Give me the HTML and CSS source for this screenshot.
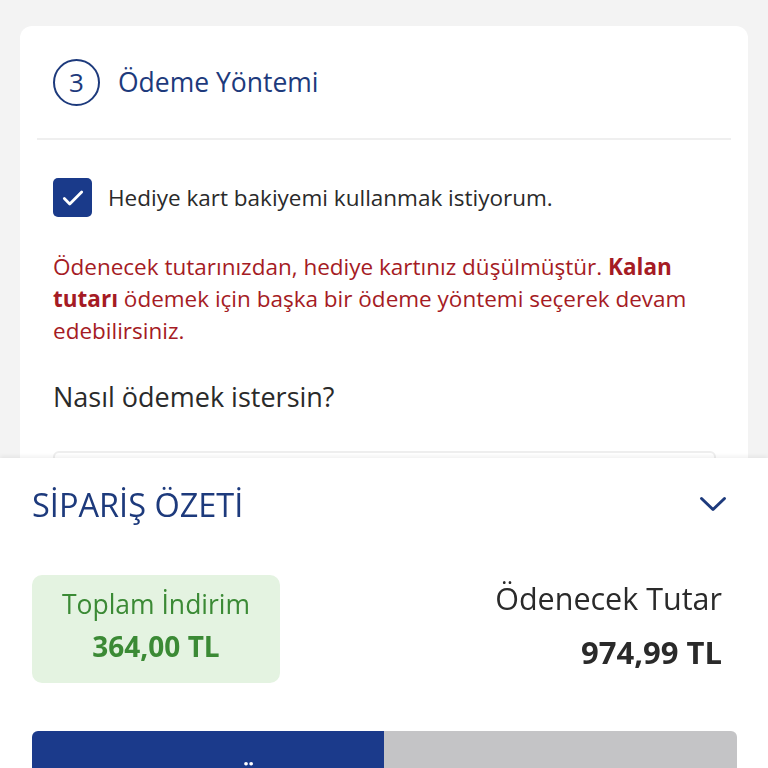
FILE: index.html
```html
<!DOCTYPE html>
<html lang="tr">
<head>
    <meta charset="UTF-8">
    <meta name="viewport" content="width=device-width, initial-scale=1.0">
    <title>Ödeme Yöntemi</title>
    <link rel="stylesheet" href="styles.css">
</head>
<body>
    <div class="page">
        <div class="card">
            <div class="step-header">
                <span class="step-number">3</span>
                <span class="step-title">Ödeme Yöntemi</span>
            </div>
            <div class="card-body">
                <label class="gift-check">
                    <span class="checkbox">
                        <svg width="26" height="26" viewBox="0 0 24 24" fill="none" stroke="#fff" stroke-width="2.6" stroke-linecap="round" stroke-linejoin="round"><path d="M4 12.5l5 5L20 6.5"/></svg>
                    </span>
                    Hediye kart bakiyemi kullanmak istiyorum.
                </label>
                <p class="gift-note">
                    Ödenecek tutarınızdan, hediye kartınız düşülmüştür. <b>Kalan tutarı</b> ödemek için başka bir ödeme yöntemi seçerek devam edebilirsiniz.
                </p>
                <p class="pay-question">Nasıl ödemek istersin?</p>
                <div class="pay-option"></div>
            </div>
        </div>
    </div>

    <div class="summary-sheet">
        <div class="summary-header">
            <span class="summary-title">SİPARİŞ ÖZETİ</span>
            <svg class="chevron" width="28" height="16" viewBox="0 0 28 16" fill="none" stroke="#1d3a7c" stroke-width="3" stroke-linecap="round" stroke-linejoin="round"><path d="M2.5 2.5l11.5 11L25.5 2.5"/></svg>
        </div>
        <div class="summary-row">
            <div class="discount-box">
                <div class="discount-label">Toplam İndirim</div>
                <div class="discount-amount">364,00 TL</div>
            </div>
            <div class="total">
                <div class="total-label">Ödenecek Tutar</div>
                <div class="total-amount">974,99 TL</div>
            </div>
        </div>
        <button class="pay-button">ÖDEMEYE DEVAM ET</button>
    </div>
</body>
</html>
```

FILE: styles.css
```css
body, html {
    margin: 0;
    height: 100%;
    overflow: hidden;
    background-color: #f3f3f3;
    font-family: 'Open Sans', 'Noto Sans', sans-serif;
    color: #2a2a2a;
}
.page {
    padding: 26px 20px 0;
}
.card {
    background-color: #fff;
    border-radius: 12px;
    padding: 0 17px;
    height: 800px;
}
.step-header {
    display: flex;
    align-items: center;
    gap: 18px;
    height: 114px;
    padding: 0 16px;
    border-bottom: 2px solid #efefef;
    box-sizing: border-box;
}
.step-number {
    display: flex;
    justify-content: center;
    align-items: center;
    width: 47px;
    height: 47px;
    box-sizing: border-box;
    border: 2px solid #1d3a7c;
    border-radius: 50%;
    color: #1d3a7c;
    font-size: 26px;
}
.step-title {
    color: #1d3a7c;
    font-size: 26.5px;
}
.card-body {
    padding: 38px 16px 0;
}
.gift-check {
    display: flex;
    align-items: center;
    gap: 16px;
    font-size: 22.5px;
    color: #2a2a2a;
}
.checkbox {
    display: flex;
    justify-content: center;
    align-items: center;
    width: 39px;
    height: 39px;
    border-radius: 5px;
    background-color: #1a3a8a;
}
.gift-note {
    margin: 34px 0 0;
    max-width: 660px;
    font-size: 22.5px;
    line-height: 32px;
    color: #a51b24;
}
.gift-note b {
    font-weight: 700;
}
.pay-question {
    margin: 31px 0 0;
    font-size: 27px;
}
.pay-option {
    margin-top: 36px;
    width: 659px;
    height: 80px;
    border: 2px solid #eeeeee;
    border-radius: 6px;
}
.summary-sheet {
    position: fixed;
    left: 0;
    right: 0;
    bottom: 0;
    height: 310px;
    background-color: #fff;
    box-shadow: 0 -2px 4px rgba(0, 0, 0, 0.06);
    padding: 0 31px 0 32px;
    box-sizing: border-box;
}
.summary-header {
    display: flex;
    justify-content: space-between;
    align-items: center;
    height: 92px;
    padding-right: 10px;
}
.summary-title {
    color: #1d3a7c;
    font-size: 32.5px;
}
.summary-row {
    display: flex;
    justify-content: space-between;
    margin-top: 25px;
}
.discount-box {
    width: 248px;
    height: 108px;
    border-radius: 10px;
    background-color: #e4f3e1;
    color: #3b8a35;
    text-align: center;
    box-sizing: border-box;
    padding-top: 11px;
}
.discount-label {
    font-size: 26.5px;
}
.discount-amount {
    margin-top: 5px;
    font-size: 28px;
    font-weight: 700;
}
.total {
    text-align: right;
    padding: 2px 15px 0 0;
}
.total-label {
    font-size: 30.5px;
}
.total-amount {
    margin-top: 12px;
    font-size: 31px;
    font-weight: 700;
}
.pay-button {
    display: block;
    width: 100%;
    height: 70px;
    margin-top: 48px;
    border: none;
    border-radius: 6px 6px 0 0;
    background: linear-gradient(to right, #1b3a8b 0, #1b3a8b 352px, #c4c4c6 352px);
    color: #fff;
    font-family: inherit;
    font-size: 26px;
    font-weight: 700;
    letter-spacing: 2px;
    padding-top: 23px;
}
```
